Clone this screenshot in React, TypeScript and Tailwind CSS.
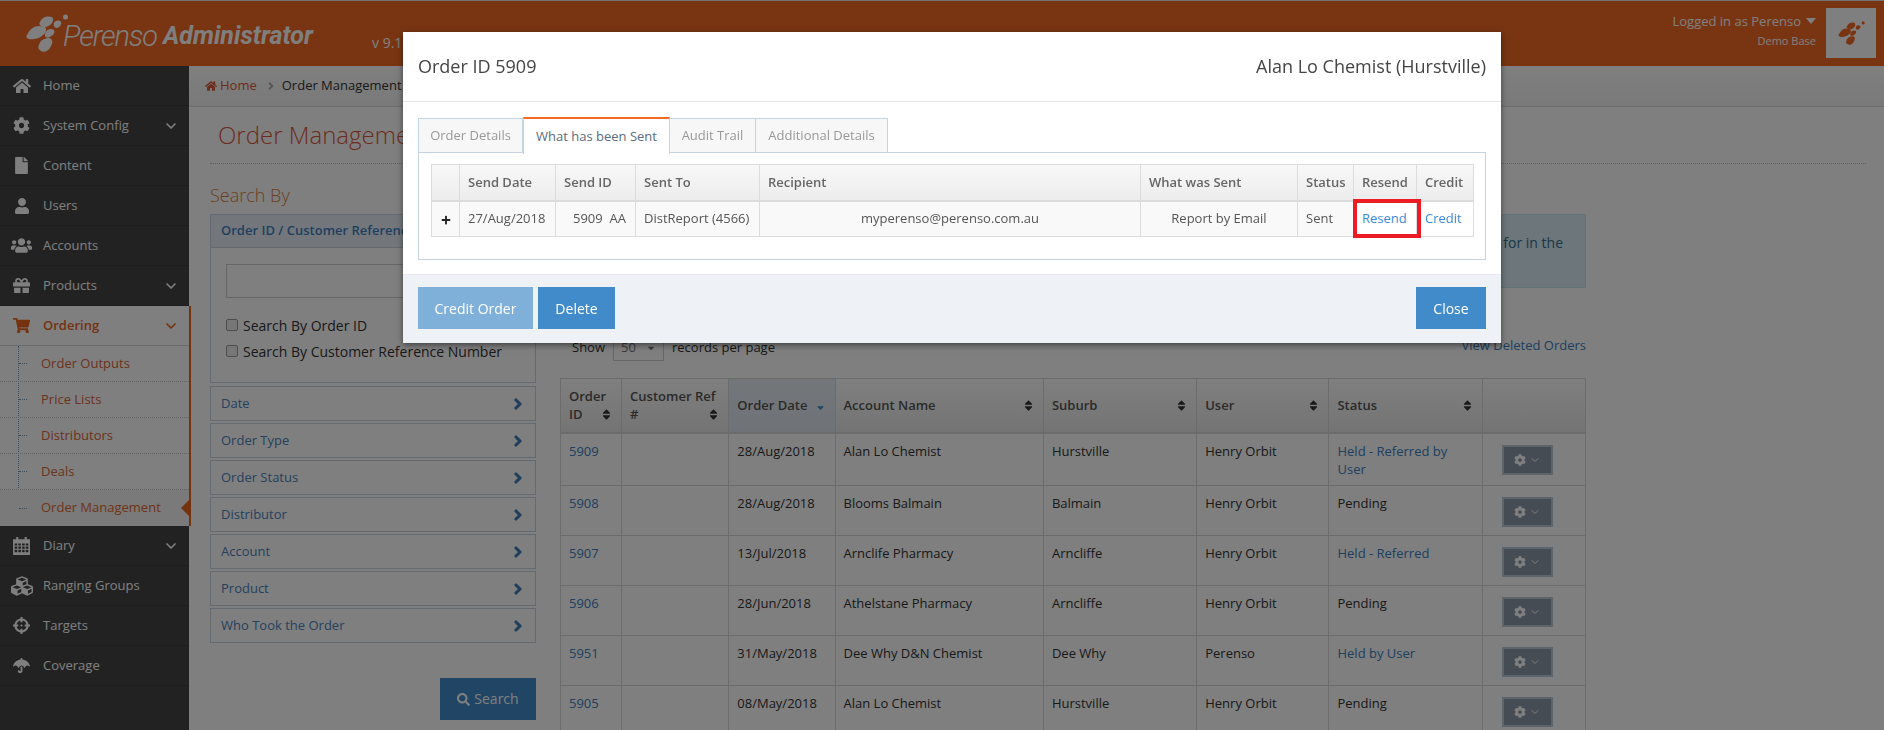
import React from 'react';
import {
  FaHome, FaCog, FaFile, FaUser, FaUsers, FaGift, FaShoppingCart, FaCubes,
  FaCrosshairs, FaUmbrella, FaChevronRight, FaSearch, FaPlus, FaSort, FaSortDown, FaCaretDown, FaAngleRight,
} from 'react-icons/fa';
import { ChevronDown } from 'lucide-react';

function Logo({ className, fill }: { className: string; fill: string }) {
  return (
    <svg viewBox="0 0 42 38" className={className} fill={fill}>
      <path d="M1 21 C4 15 8 12 13 12 L19 13 C21 15 20 19 17 21 C13 25 7 26 3 25 C0 24 0 23 1 21Z" />
      <path d="M14 8 C17 2 22 2 26 3 C28 5 27 9 24 11 C22 13 17 14 15 12 C13 11 13 9 14 8Z" />
      <path d="M13 31 C14 26 19 24 23 24 C27 25 27 28 25 32 C23 37 18 39 15 37 C12 35 12 33 13 31Z" />
      <path d="M19 19 C21 15 25 14 28 16 C29 18 28 21 25 22 C23 24 20 24 19 22Z" />
      <path d="M28 9 C30 6 33 6 35 8 C36 10 34 13 31 14 C29 14 27 12 28 9Z" />
      <circle cx="39.5" cy="3" r="2.5" />
    </svg>
  );
}

function CalendarIcon({ className }: { className?: string }) {
  return (
    <svg viewBox="0 0 18 18" className={className} fill="currentColor">
      <path fillRule="evenodd" d="M1 3 H4 V1 H6 V3 H12 V1 H14 V3 H17 V18 H1 Z M2.5 7 V9 H5 V7 Z M6 7 V9 H8.5 V7 Z M9.5 7 V9 H12 V7 Z M13 7 V9 H15.5 V7 Z M2.5 10 V12 H5 V10 Z M6 10 V12 H8.5 V10 Z M9.5 10 V12 H12 V10 Z M13 10 V12 H15.5 V10 Z M2.5 13 V15.5 H5 V13 Z M6 13 V15.5 H8.5 V13 Z M9.5 13 V15.5 H12 V13 Z M13 13 V15.5 H15.5 V13 Z" />
    </svg>
  );
}

const topNav = [
  { label: 'Home', Icon: FaHome, size: 'text-[18px]' },
  { label: 'System Config', Icon: FaCog, more: true, size: 'text-[17px]' },
  { label: 'Content', Icon: FaFile, size: 'text-[17px]' },
  { label: 'Users', Icon: FaUser, size: 'text-[16px]' },
  { label: 'Accounts', Icon: FaUsers, size: 'text-[21px]' },
  { label: 'Products', Icon: FaGift, more: true, size: 'text-[17px]' },
];
const bottomNav = [
  { label: 'Diary', Icon: CalendarIcon, more: true, size: 'w-[19px] h-[19px]' },
  { label: 'Ranging Groups', Icon: FaCubes, size: 'text-[22px]' },
  { label: 'Targets', Icon: FaCrosshairs, size: 'text-[17px]' },
  { label: 'Coverage', Icon: FaUmbrella, size: 'text-[17px]' },
];
const subNav = ['Order Outputs', 'Price Lists', 'Distributors', 'Deals', 'Order Management'];

function NavRow({ label, Icon, more, size }: { label: string; Icon: React.ComponentType<{ className?: string }>; more?: boolean; size: string }) {
  return (
    <div className="h-10 flex items-center border-b border-[#3a3a3a] text-white text-[13px]">
      <span className="w-[43px] flex justify-center shrink-0"><Icon className={size} /></span>
      <span className="flex-1">{label}</span>
      {more && <ChevronDown size={16} strokeWidth={2.5} className="mr-[10px]" />}
    </div>
  );
}

const rows = [
  { id: '5909', date: '28/Aug/2018', name: 'Alan Lo Chemist', suburb: 'Hurstville', user: 'Henry Orbit', status: 'Held - Referred by User', link: true, h: 'h-[53px]' },
  { id: '5908', date: '28/Aug/2018', name: 'Blooms Balmain', suburb: 'Balmain', user: 'Henry Orbit', status: 'Pending', link: false, h: 'h-[50px]' },
  { id: '5907', date: '13/Jul/2018', name: 'Arnclife Pharmacy', suburb: 'Arncliffe', user: 'Henry Orbit', status: 'Held - Referred', link: true, h: 'h-[50px]' },
  { id: '5906', date: '28/Jun/2018', name: 'Athelstane Pharmacy', suburb: 'Arncliffe', user: 'Henry Orbit', status: 'Pending', link: false, h: 'h-[50px]' },
  { id: '5951', date: '31/May/2018', name: 'Dee Why D&N Chemist', suburb: 'Dee Why', user: 'Perenso', status: 'Held by User', link: true, h: 'h-[50px]' },
  { id: '5905', date: '08/May/2018', name: 'Alan Lo Chemist', suburb: 'Hurstville', user: 'Henry Orbit', status: 'Pending', link: false, h: 'h-[50px]' },
];

function Th({ children, w, sorted }: { children?: React.ReactNode; w: string; sorted?: boolean }) {
  return (
    <th className={`${w} border border-[#d8d8d8] border-b-2 px-2 font-semibold text-left text-[13px] leading-[18px] text-[#555] ${sorted ? 'bg-linear-to-b from-[#e6edf4] to-[#dfe6ee]' : ''}`}>
      {children}
    </th>
  );
}

function SortLabel({ children }: { children: React.ReactNode }) {
  return (
    <div className="flex items-center justify-between">
      <span>{children}</span>
      <FaSort className="text-[13px] text-[#333] shrink-0" />
    </div>
  );
}

function TwoLine({ first, second }: { first: string; second: string }) {
  return (
    <div className="whitespace-nowrap">
      <div>{first}</div>
      <div className="flex items-center justify-between">
        <span>{second}</span>
        <FaSort className="text-[13px] text-[#333] shrink-0" />
      </div>
    </div>
  );
}

function Accordion({ label }: { label: string }) {
  return (
    <div className="h-[35px] border border-[#c6d4e2] flex items-center justify-between pl-[10px] pr-[11px] text-[13px] text-[#4a82bb]">
      <span>{label}</span>
      <FaChevronRight className="text-[12px] text-[#3e7cb8]" stroke="currentColor" strokeWidth={50} />
    </div>
  );
}

export default function App() {
  const font = { fontFamily: '"Open Sans", "Noto Sans", sans-serif' };
  return (
    <div style={font} className="h-screen w-full overflow-hidden relative bg-white text-[#333] flex flex-col">
      <header className="h-[66px] shrink-0 border-t border-[#e5e5e5] bg-[#f36a25] flex items-start text-white">
        <div className="flex items-center pl-[26px] pt-[11px]">
          <Logo className="w-[42px] h-[38px]" fill="#ffffff" />
          <span className="ml-[-5px] mt-[6px] w-[92px] text-[29px] leading-[36px] font-light italic tracking-[-1px] whitespace-nowrap" style={{ fontFamily: 'Roboto, sans-serif' }}>Perenso</span>
          <span className="ml-[8px] mt-[6px] w-[152px] text-[25px] leading-[36px] font-bold italic whitespace-nowrap" style={{ fontFamily: 'Roboto, sans-serif' }}>Administrator</span>
        </div>
        <span className="ml-[57px] mt-[33px] text-[14px] leading-[18px]">v 9.1</span>
        <div className="ml-auto mr-[8px] mt-[7px] flex gap-[10px]">
          <div className="text-right pt-[3px]">
            <div className="flex items-center text-[13px] leading-[20px]">Logged in as Perenso<span className="ml-[5px] border-x-[5px] border-x-transparent border-t-[6px] border-t-white" /></div>
            <div className="text-[11px] leading-[20px]">Demo Base</div>
          </div>
          <div className="w-[50px] h-[50px] bg-white flex items-center justify-center">
            <Logo className="w-[27px] h-[24px]" fill="#f36a25" />
          </div>
        </div>
      </header>

      <div className="flex flex-1 min-h-0">
        <aside className="w-[189px] shrink-0 bg-[#454545]">
          {topNav.map((n) => <NavRow key={n.label} {...n} />)}
          <div className="w-[191px] relative z-10 bg-white border-r-2 border-[#e8651f]">
            <div className="h-10 flex items-center border-b border-[#d4d4d4] text-[#e8651f] text-[13px] font-semibold">
              <span className="w-[43px] flex justify-center shrink-0"><FaShoppingCart className="text-[17px]" /></span>
              <span className="flex-1">Ordering</span>
              <ChevronDown size={16} strokeWidth={2.5} className="mr-[10px]" />
            </div>
            <div className="relative">
              <div className="absolute left-[18px] top-0 bottom-0 border-l border-dotted border-[#7f9ab3]" />
              {subNav.map((s) => (
                <div key={s} className={`h-9 flex items-center pl-[41px] text-[13px] text-[#d9663a] border-b border-dotted border-[#c4c4c4] relative ${s === 'Order Management' ? 'bg-[#f4f4f4] border-b-0 text-[#e06a30]' : ''}`}>
                  <span className="absolute left-[19px] w-[8px] border-t border-dotted border-[#7f9ab3]" />
                  {s}
                </div>
              ))}
              <span className="absolute right-0 bottom-[10px] border-y-[8px] border-y-transparent border-r-[8px] border-r-[#e8651f]" />
            </div>
          </div>
          {bottomNav.map((n) => <NavRow key={n.label} {...n} />)}
        </aside>

        <main className="flex-1 min-w-0">
          <div className="h-[41px] border-b border-[#dcdcdc] bg-linear-to-b from-white to-[#f3f3f3] flex items-center pl-[16px] text-[13px]">
            <FaHome className="text-[#d9583a] text-[12px] mr-[3px]" />
            <span className="text-[#d9583a]">Home</span>
            <FaAngleRight className="ml-[8px] mr-[5px] text-[#aaa] text-[12px]" />
            <span>Order Management</span>
          </div>

          <div className="pl-[21px] pr-[18px]">
            <div className="h-[57px] border-b border-dotted border-[#bdbdbd] pl-[8px] text-[24px] leading-[56px] text-[#d9583a] font-light">Order Management</div>
          </div>

          <div className="pl-[21px] pt-[18px] flex gap-[24px]">
            <div className="w-[326px] shrink-0">
              <div className="h-[32px] text-[18px] leading-[26px] font-light text-[#d9803f]">Search By</div>
              <div className="border border-[#c6d4e2]">
                <div className="h-[33px] bg-[#e6eff7] flex items-center pl-[10px] text-[13px] font-semibold text-[#3f7fbf] border-b border-[#c6d4e2] whitespace-nowrap overflow-hidden">Order ID / Customer Reference Number</div>
                <div className="h-[134px] px-[15px] pt-[16px]">
                  <div className="h-[34px] border border-[#ccc] bg-white" />
                  <label className="mt-[20px] flex items-center h-[14px] text-[14px]">
                    <span className="w-[12px] h-[12px] rounded-[2px] border border-[#999] bg-[#eee] mr-[5px]" />Search By Order ID
                  </label>
                  <label className="mt-[12px] flex items-center h-[14px] text-[14px] whitespace-nowrap">
                    <span className="w-[12px] h-[12px] rounded-[2px] border border-[#999] bg-[#eee] mr-[5px]" />Search By Customer Reference Number
                  </label>
                </div>
              </div>
              <div className="mt-[3px] flex flex-col gap-[2px]">
                {['Date', 'Order Type', 'Order Status', 'Distributor', 'Account', 'Product', 'Who Took the Order'].map((l) => <Accordion key={l} label={l} />)}
              </div>
              <div className="mt-[35px] flex justify-end">
                <button className="w-[96px] h-[42px] bg-[#428bca] text-white text-[14px] flex items-center justify-center gap-[4px]"><FaSearch className="text-[13px]" /><span className="-mt-[1px]">Search</span></button>
              </div>
            </div>

            <div className="w-[1026px] shrink-0 pt-[32px]">
              <div className="h-[74px] bg-[#d9edf7] border border-[#bce8f1] text-[#31708f] text-[14px] flex justify-end pt-[17px] pr-[22px]">for in the</div>
              <div className="mt-[46px] h-[27px] flex items-start justify-between text-[13px]">
                <div className="flex items-start">
                  <span className="ml-[12px] leading-[27px]">Show</span>
                  <span className="ml-[8px] w-[51px] h-[27px] border border-[#ccc] flex items-center justify-between px-[7px] text-[13px] text-[#777]">50<FaCaretDown className="text-[10px]" /></span>
                  <span className="ml-[8px] leading-[27px]">records per page</span>
                </div>
                <a className="text-[#3b7fc0] leading-[22px]">View Deleted Orders</a>
              </div>
              <table className="mt-[17px] w-full table-fixed border-collapse text-[13px]">
                <thead>
                  <tr className="h-[54px] bg-linear-to-b from-white to-[#e8e8e8]">
                    <Th w="w-[61px]"><TwoLine first="Order" second="ID" /></Th>
                    <Th w="w-[107px]"><TwoLine first="Customer Ref" second="#" /></Th>
                    <Th w="w-[106px]" sorted><div className="flex items-center justify-between">Order Date<FaSortDown className="text-[11px] text-[#428bca] mr-[1px]" /></div></Th>
                    <Th w="w-[208px]"><SortLabel>Account Name</SortLabel></Th>
                    <Th w="w-[153px]"><SortLabel>Suburb</SortLabel></Th>
                    <Th w="w-[132px]"><SortLabel>User</SortLabel></Th>
                    <Th w="w-[153px]"><SortLabel>Status</SortLabel></Th>
                    <Th w="w-[103px]" />
                  </tr>
                </thead>
                <tbody>
                  {rows.map((r) => (
                    <tr key={r.id} className={r.h}>
                      <td className="border border-[#d8d8d8] px-2 pt-[8px] align-top leading-[18px] text-[#3b7fc0]">{r.id}</td>
                      <td className="border border-[#d8d8d8] px-2" />
                      <td className="border border-[#d8d8d8] px-2 pt-[8px] align-top leading-[18px]">{r.date}</td>
                      <td className="border border-[#d8d8d8] px-2 pt-[8px] align-top leading-[18px]">{r.name}</td>
                      <td className="border border-[#d8d8d8] px-2 pt-[8px] align-top leading-[18px]">{r.suburb}</td>
                      <td className="border border-[#d8d8d8] px-2 pt-[8px] align-top leading-[18px]">{r.user}</td>
                      <td className={`border border-[#d8d8d8] px-2 pt-[8px] align-top leading-[18px] ${r.link ? 'text-[#3b7fc0]' : ''}`}>{r.status}</td>
                      <td className="border border-[#d8d8d8] align-top pt-[11px] pl-[19px]">
                        <div className="w-[51px] h-[30px] border-2 border-[#bac8d6] bg-[#8a98a6] text-white flex items-center justify-center gap-[3px]">
                          <FaCog className="text-[12px]" /><ChevronDown size={12} strokeWidth={2} />
                        </div>
                      </td>
                    </tr>
                  ))}
                </tbody>
              </table>
            </div>
          </div>
        </main>
      </div>

      <div className="fixed inset-0 z-20 bg-black/50" />

      <div className="absolute z-30 left-[403px] top-[32px] w-[1098px] h-[311px] bg-white shadow-[0_2px_6px_rgba(0,0,0,0.5)] flex flex-col">
        <div className="h-[70px] shrink-0 border-b border-[#e5e5e5] flex items-center justify-between px-[15px] text-[18px] text-[#444]">
          <span>Order ID 5909</span>
          <span>Alan Lo Chemist (Hurstville)</span>
        </div>
        <div className="h-[172px] shrink-0 px-[15px] pt-[16px] relative">
          <div className="flex h-[35px] text-[13px] text-[#999]">
            <div className="w-[105px] border border-[#c6d4e2] bg-[#f7f7f7] flex items-center justify-center">Order Details</div>
            <div className="w-[147px] relative z-10 border-t-[2px] border-t-[#f36a25] border-x border-x-[#c6d4e2] bg-white text-[#5b6b7c] flex items-center justify-center -mt-[1px] h-[37px]">What has been Sent</div>
            <div className="w-[86px] border border-l-0 border-[#c6d4e2] bg-[#f7f7f7] flex items-center justify-center">Audit Trail</div>
            <div className="w-[132px] border border-l-0 border-[#c6d4e2] bg-[#f7f7f7] flex items-center justify-center">Additional Details</div>
          </div>
          <div className="-mt-[1px] h-[108px] border border-[#c6d4e2] px-[12px] pt-[11px]">
            <table className="w-[1042px] table-fixed border-collapse text-[13px] text-[#555]">
              <thead>
                <tr className="h-[36px] bg-linear-to-b from-[#f8f8f8] to-[#ececec] text-[#666]">
                  {[['w-[28px]', ''], ['w-[96px]', 'Send Date'], ['w-[80px]', 'Send ID'], ['w-[124px]', 'Sent To'], ['w-[381px]', 'Recipient'], ['w-[157px]', 'What was Sent'], ['w-[56px]', 'Status'], ['w-[63px]', 'Resend'], ['w-[57px]', 'Credit']].map(([w, t]) => (
                    <th key={t || 'x'} className={`${w} border border-[#dcdcdc] border-b-[2px] px-[8px] text-left font-semibold`}>{t}</th>
                  ))}
                </tr>
              </thead>
              <tbody>
                <tr className="h-[36px] bg-[#f9f9f9]">
                  <td className="border border-[#dcdcdc] text-center text-[#222]"><FaPlus className="inline text-[10px]" /></td>
                  <td className="border border-[#dcdcdc] px-[8px]">27/Aug/2018</td>
                  <td className="border border-[#dcdcdc] pl-[17px] whitespace-pre">5909  AA</td>
                  <td className="border border-[#dcdcdc] px-[8px] whitespace-nowrap">DistReport (4566)</td>
                  <td className="border border-[#dcdcdc] px-[8px] text-center">myperenso@perenso.com.au</td>
                  <td className="border border-[#dcdcdc] px-[8px] text-center">Report by Email</td>
                  <td className="border border-[#dcdcdc] px-[8px]">Sent</td>
                  <td className="border border-[#dcdcdc] px-[8px] text-[#3b8ad9] relative bg-white">
                    Resend
                    <span className="absolute left-[-1px] top-[-3px] w-[68px] h-[39px] border-[4px] border-[#ed1c24]" />
                  </td>
                  <td className="border border-[#dcdcdc] px-[8px] text-[#3b8ad9] bg-white">Credit</td>
                </tr>
              </tbody>
            </table>
          </div>
        </div>
        <div className="flex-1 bg-[#eef1f6] border-t border-[#e5e8ec] flex items-start pt-[12px] px-[15px] text-[14px] text-white">
          <button className="w-[115px] h-[42px] bg-[#7fb0da]">Credit Order</button>
          <button className="ml-[5px] w-[77px] h-[42px] bg-[#428bca]">Delete</button>
          <button className="ml-auto w-[70px] h-[42px] bg-[#428bca]">Close</button>
        </div>
      </div>
    </div>
  );
}
